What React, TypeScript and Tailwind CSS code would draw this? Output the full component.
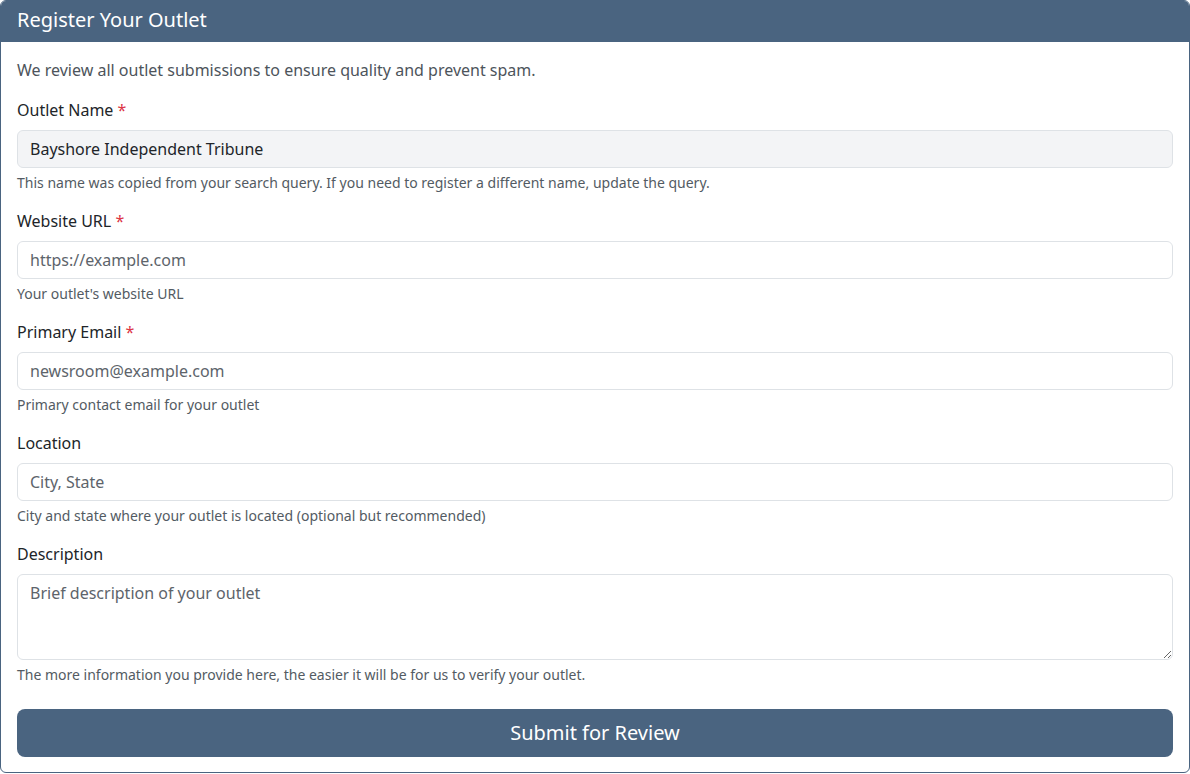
const font = { fontFamily: '"Noto Sans", "Open Sans", sans-serif' }

function Field({
  label,
  required,
  help,
  children,
}: {
  label: string
  required?: boolean
  help: string
  children: React.ReactNode
}) {
  return (
    <div className="mb-4">
      <label className="mb-2 block text-base leading-6 text-[#212529]">
        {label}
        {required && <span className="text-[#dc3545]"> *</span>}
      </label>
      {children}
      <div className="mt-1 text-sm leading-[21px] text-[#535b63]">{help}</div>
    </div>
  )
}

const inputCls =
  'block w-full h-[38px] rounded-md border border-[#dee2e6] bg-white px-3 py-1.5 text-base leading-6 text-[#212529] placeholder:text-[#5d646b] outline-none'

export default function App() {
  return (
    <div className="bg-white" style={font}>
      <div className="h-[773px] w-[1190px] overflow-hidden rounded-md border border-[#4a6480] bg-white">
        <div className="h-[41px] bg-[#4a6480] px-4 pt-[7px] text-xl leading-6 text-white">
          Register Your Outlet
        </div>
        <div className="p-4">
          <p className="mb-4 text-base leading-6 text-[#4d545b]">
            We review all outlet submissions to ensure quality and prevent spam.
          </p>
          <Field
            label="Outlet Name"
            required
            help="This name was copied from your search query. If you need to register a different name, update the query."
          >
            <input
              className={inputCls + ' bg-[#f3f4f6]'}
              defaultValue="Bayshore Independent Tribune"
              readOnly
              style={{ backgroundColor: '#f3f4f6' }}
            />
          </Field>
          <Field label="Website URL" required help="Your outlet's website URL">
            <input className={inputCls} placeholder="https://example.com" />
          </Field>
          <Field label="Primary Email" required help="Primary contact email for your outlet">
            <input className={inputCls} placeholder="newsroom@example.com" />
          </Field>
          <Field label="Location" help="City and state where your outlet is located (optional but recommended)">
            <input className={inputCls} placeholder="City, State" />
          </Field>
          <div className="mb-6">
            <label className="mb-2 block text-base leading-6 text-[#212529]">Description</label>
            <textarea
              rows={3}
              className="block h-[86px] w-full rounded-md border border-[#dee2e6] bg-white px-3 py-1.5 text-base leading-6 text-[#212529] placeholder:text-[#5d646b] outline-none"
              placeholder="Brief description of your outlet"
            />
            <div className="mt-1 text-sm leading-[21px] text-[#535b63]">
              The more information you provide here, the easier it will be for us to verify your outlet.
            </div>
          </div>
          <button className="block h-12 w-full rounded-lg bg-[#4a6480] text-xl leading-[30px] text-white">
            Submit for Review
          </button>
        </div>
      </div>
    </div>
  )
}
